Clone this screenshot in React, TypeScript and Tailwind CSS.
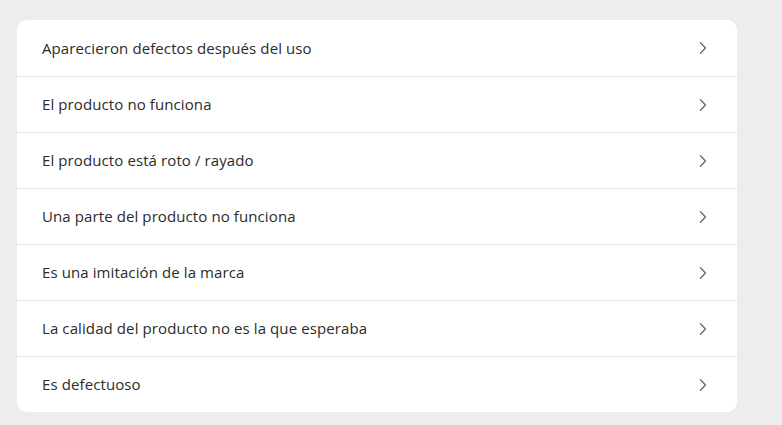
const reasons = [
  'Aparecieron defectos después del uso',
  'El producto no funciona',
  'El producto está roto / rayado',
  'Una parte del producto no funciona',
  'Es una imitación de la marca',
  'La calidad del producto no es la que esperaba',
  'Es defectuoso',
];

function Chevron() {
  return (
    <svg width="8" height="12" viewBox="0 0 8 12" fill="none" className="shrink-0">
      <path d="M1.5 0.8L6.5 6L1.5 11.2" stroke="#666" strokeWidth="1.3" strokeLinecap="round" strokeLinejoin="round" />
    </svg>
  );
}

export default function App() {
  return (
    <div className="min-h-[425px] w-[782px] bg-[#ededed] pt-[20px] pl-[17px]" style={{ fontFamily: '"Open Sans", Lato, sans-serif' }}>
      <ul className="w-[720px] overflow-hidden rounded-[10px] bg-white">
        {reasons.map((r, i) => (
          <li
            key={r}
            className={`flex h-[56px] cursor-pointer items-center justify-between pl-[25px] pr-[30px] ${
              i > 0 ? 'border-t border-[#e4e4e4]' : ''
            }`}
          >
            <span className="text-[15px] tracking-[0.1px] text-[#2b2b2b]">{r}</span>
            <Chevron />
          </li>
        ))}
      </ul>
    </div>
  );
}
